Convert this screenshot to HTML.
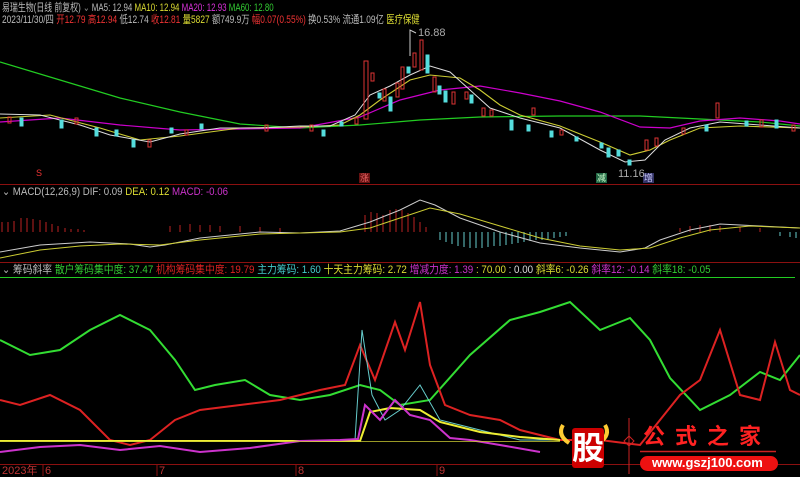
<!DOCTYPE html><html><head><meta charset="utf-8"><style>
body{margin:0;background:#000;width:800px;height:476px;overflow:hidden;font-family:"Liberation Sans","Noto Sans CJK SC",sans-serif;font-size:11px}
.t{position:absolute;white-space:nowrap;line-height:12px;transform-origin:0 0}
</style></head><body>
<div style="position:relative;width:800px;height:476px">
<svg width="800" height="476" style="position:absolute;left:0;top:0">
<line x1="0" y1="184.5" x2="800" y2="184.5" stroke="#8b1010"/>
<line x1="0" y1="262.5" x2="800" y2="262.5" stroke="#8b1010"/>
<line x1="0" y1="277.5" x2="795" y2="277.5" stroke="#2c2"/>
<line x1="0" y1="464.5" x2="800" y2="464.5" stroke="#8b1010"/>
<g stroke="#8b1010"><line x1="43" y1="465" x2="43" y2="476"/><line x1="157" y1="465" x2="157" y2="476"/><line x1="296" y1="465" x2="296" y2="476"/><line x1="437" y1="465" x2="437" y2="476"/></g>
<polyline fill="none" stroke="#2c2" stroke-width="1.2" points="0,62 60,80 120,98 180,112 240,124 300,128 360,125 420,120 480,117 560,116 640,116 700,119 760,122 800,126"/>
<polyline fill="none" stroke="#c0c" stroke-width="1.2" points="0,122 60,118 120,125 180,130 240,129 300,128 360,117 400,100 440,90 480,86 520,93 560,101 600,112 640,127 670,128 700,121 740,118 780,121 800,124"/>
<polyline fill="none" stroke="#cc3" stroke-width="1.1" points="0,118 50,115 100,128 140,140 180,136 240,128 300,127 340,125 360,115 380,100 410,80 430,75 460,78 480,90 500,105 520,115 560,126 600,142 630,155 650,150 670,140 700,128 740,126 800,128"/>
<polyline fill="none" stroke="#ddd" stroke-width="1" points="0,114 40,115 80,125 110,135 150,142 180,134 220,128 260,128 300,126 330,126 355,115 370,95 390,86 410,75 430,66 450,72 470,90 490,108 520,118 560,128 600,150 625,162 645,160 665,140 690,128 720,122 760,125 800,128"/>
<g fill="#5dd" stroke="#5dd">
<rect x="20" y="118" width="3" height="8"/><rect x="60" y="120" width="3" height="8"/><rect x="95" y="128" width="3" height="8"/><rect x="115" y="130" width="3" height="6"/><rect x="132" y="140" width="3" height="7"/><rect x="170" y="128" width="3" height="5"/><rect x="200" y="124" width="3" height="5"/><rect x="322" y="130" width="3" height="6"/><rect x="340" y="122" width="3" height="4"/><rect x="378" y="93" width="3" height="5"/><rect x="389" y="97" width="3" height="14"/><rect x="407" y="67" width="3" height="6"/><rect x="426" y="55" width="3" height="18"/><rect x="438" y="86" width="3" height="8"/><rect x="444" y="91" width="3" height="11"/><rect x="470" y="95" width="3" height="8"/><rect x="510" y="120" width="3" height="10"/><rect x="527" y="125" width="3" height="6"/><rect x="550" y="131" width="3" height="6"/><rect x="575" y="137" width="3" height="4"/><rect x="600" y="143" width="3" height="5"/><rect x="607" y="148" width="3" height="9"/><rect x="617" y="150" width="3" height="6"/><rect x="628" y="160" width="3" height="5"/><rect x="705" y="125" width="3" height="6"/><rect x="745" y="121" width="3" height="5"/><rect x="775" y="120" width="3" height="8"/>
</g>
<g fill="none" stroke="#d33">
<rect x="8" y="117" width="3" height="6"/><rect x="75" y="118" width="3" height="6"/><rect x="148" y="140" width="3" height="7"/><rect x="185" y="130" width="3" height="5"/><rect x="265" y="125" width="3" height="6"/><rect x="310" y="125" width="3" height="6"/><rect x="355" y="118" width="3" height="6"/><rect x="364" y="61" width="4" height="58"/><rect x="371" y="73" width="3" height="8"/><rect x="383" y="89" width="3" height="12"/><rect x="396" y="83" width="3" height="14"/><rect x="401" y="67" width="3" height="22"/><rect x="413" y="53" width="3" height="14"/><rect x="420" y="40" width="3" height="30"/><rect x="433" y="77" width="3" height="15"/><rect x="452" y="92" width="3" height="12"/><rect x="465" y="92" width="3" height="7"/><rect x="482" y="108" width="3" height="8"/><rect x="490" y="110" width="3" height="6"/><rect x="532" y="108" width="3" height="7"/><rect x="560" y="130" width="3" height="5"/><rect x="645" y="140" width="3" height="10"/><rect x="655" y="138" width="3" height="8"/><rect x="682" y="128" width="3" height="6"/><rect x="716" y="103" width="3" height="15"/><rect x="760" y="120" width="3" height="7"/><rect x="792" y="125" width="3" height="6"/>
</g>
<polyline fill="none" stroke="#ccc" points="410,56 410,30 416,33"/>
<rect x="359" y="173" width="11" height="10" fill="#611"/>
<rect x="596" y="173" width="11" height="10" fill="#264"/>
<rect x="643" y="173" width="11" height="10" fill="#336"/>
<g stroke="#b22">
<line x1="2" y1="222" x2="2" y2="232"/><line x1="8" y1="222" x2="8" y2="232"/><line x1="14" y1="221" x2="14" y2="232"/><line x1="21" y1="218" x2="21" y2="232"/><line x1="27" y1="218" x2="27" y2="232"/><line x1="33" y1="219" x2="33" y2="232"/><line x1="40" y1="220" x2="40" y2="232"/><line x1="46" y1="222" x2="46" y2="232"/><line x1="52" y1="224" x2="52" y2="232"/><line x1="58" y1="226" x2="58" y2="232"/><line x1="65" y1="228" x2="65" y2="232"/><line x1="71" y1="229" x2="71" y2="232"/><line x1="78" y1="229" x2="78" y2="232"/><line x1="84" y1="230" x2="84" y2="232"/>
<line x1="170" y1="226" x2="170" y2="232"/><line x1="180" y1="225" x2="180" y2="232"/><line x1="190" y1="224" x2="190" y2="232"/><line x1="200" y1="225" x2="200" y2="232"/><line x1="210" y1="225" x2="210" y2="232"/><line x1="220" y1="226" x2="220" y2="232"/><line x1="240" y1="226" x2="240" y2="232"/><line x1="260" y1="227" x2="260" y2="232"/><line x1="280" y1="228" x2="280" y2="232"/>
<line x1="365" y1="215" x2="365" y2="232"/><line x1="371" y1="212" x2="371" y2="232"/><line x1="377" y1="213" x2="377" y2="232"/><line x1="383" y1="215" x2="383" y2="232"/><line x1="390" y1="210" x2="390" y2="232"/><line x1="396" y1="209" x2="396" y2="232"/><line x1="402" y1="210" x2="402" y2="232"/><line x1="408" y1="213" x2="408" y2="232"/><line x1="414" y1="217" x2="414" y2="232"/><line x1="420" y1="222" x2="420" y2="232"/><line x1="426" y1="227" x2="426" y2="232"/>
<line x1="680" y1="228" x2="680" y2="232"/><line x1="690" y1="226" x2="690" y2="232"/><line x1="700" y1="225" x2="700" y2="232"/><line x1="710" y1="225" x2="710" y2="232"/><line x1="720" y1="226" x2="720" y2="232"/><line x1="740" y1="227" x2="740" y2="232"/><line x1="760" y1="228" x2="760" y2="232"/>
</g>
<g stroke="#6cc">
<line x1="440" y1="232" x2="440" y2="240"/><line x1="446" y1="232" x2="446" y2="242"/><line x1="452" y1="232" x2="452" y2="244"/><line x1="458" y1="232" x2="458" y2="246"/><line x1="464" y1="232" x2="464" y2="247"/><line x1="470" y1="232" x2="470" y2="248"/><line x1="476" y1="232" x2="476" y2="248"/><line x1="482" y1="232" x2="482" y2="248"/><line x1="488" y1="232" x2="488" y2="247"/><line x1="494" y1="232" x2="494" y2="246"/><line x1="500" y1="232" x2="500" y2="246"/><line x1="506" y1="232" x2="506" y2="245"/><line x1="512" y1="232" x2="512" y2="244"/><line x1="518" y1="232" x2="518" y2="243"/><line x1="524" y1="232" x2="524" y2="242"/><line x1="530" y1="232" x2="530" y2="241"/><line x1="536" y1="232" x2="536" y2="240"/><line x1="542" y1="232" x2="542" y2="240"/><line x1="548" y1="232" x2="548" y2="239"/><line x1="554" y1="232" x2="554" y2="238"/><line x1="560" y1="232" x2="560" y2="237"/><line x1="566" y1="232" x2="566" y2="236"/><line x1="780" y1="232" x2="780" y2="236"/><line x1="790" y1="232" x2="790" y2="237"/><line x1="796" y1="232" x2="796" y2="238"/>
</g>
<polyline fill="none" stroke="#ccc" points="0,252 40,245 90,242 130,244 150,247 165,245 200,238 260,232 300,233 340,231 370,222 400,210 420,200 435,205 460,218 500,232 540,243 580,248 620,252 645,248 660,240 690,230 720,224 760,226 800,228"/>
<polyline fill="none" stroke="#cc3" points="0,258 40,250 80,246 120,244 160,245 200,240 260,234 300,233 340,232 370,228 400,218 430,208 460,214 500,226 540,238 580,246 620,250 650,248 680,238 710,230 750,226 800,228"/>
<polyline fill="none" stroke="#3d3" stroke-width="2" points="0,340 30,355 60,350 90,330 120,315 150,330 175,360 195,390 215,385 245,380 270,395 300,400 330,395 360,385 380,390 400,405 430,400 470,355 510,320 540,312 570,302 600,330 630,318 650,340 670,378 700,410 730,395 760,372 780,380 800,355"/>
<polyline fill="none" stroke="#d22" stroke-width="2" points="0,400 20,405 50,395 80,410 110,440 130,445 150,440 175,420 200,410 240,405 280,400 320,390 345,385 360,345 375,380 395,322 405,350 420,302 430,365 445,405 470,415 500,420 520,430 560,440 600,440 640,445 680,395 700,380 720,330 740,395 760,400 775,342 790,390 800,395"/>
<polyline fill="none" stroke="#6cc" stroke-width="1" points="355,440 362,330 372,395 385,420 400,410 420,385 440,420 480,430 520,440 560,440"/>
<polyline fill="none" stroke="#ee3" stroke-width="2" points="0,441 360,441 370,412 390,408 420,410 440,422 480,432 520,437 560,440"/>
<polyline fill="none" stroke="#c3c" stroke-width="2" points="0,452 40,447 80,445 120,450 160,446 200,452 250,448 300,441 340,440 358,439 365,405 380,420 395,400 410,415 430,420 450,438 470,440 500,445 540,452"/>
<line x1="0" y1="441.5" x2="560" y2="441.5" stroke="#cc3" stroke-width="0.8"/>
<line x1="629" y1="418" x2="629" y2="474" stroke="#c22"/>
<path d="M629 436 l5 5 -5 5 -5 -5z" fill="none" stroke="#c22"/>
<line x1="640" y1="451.5" x2="776" y2="451.5" stroke="#c22" stroke-width="1.5"/>
<rect x="640" y="456" width="138" height="15" rx="7.5" fill="#e11"/>
<path d="M563 425 q-6 10 6 18 M605 425 q6 10 -6 18" fill="none" stroke="#fc3" stroke-width="4"/>
<rect x="572" y="428" width="32" height="40" fill="#c00" rx="3"/>
</svg>
<div class="t" style="left:2px;top:2px;color:#bbb;transform:scaleX(0.72)">易瑞生物(日线 前复权) <span style="color:#888">⌄</span> MA5: 12.94 <span style="color:#dd3">MA10: 12.94</span> <span style="color:#d3d">MA20: 12.93</span> <span style="color:#3c3">MA60: 12.80</span></div>
<div class="t" style="left:2px;top:14px;color:#bbb;transform:scaleX(0.76)">2023/11/30/四 <span style="color:#e33">开12.79 高12.94</span> 低12.74 <span style="color:#e33">收12.81</span> <span style="color:#dd3">量5827</span> 额749.9万 <span style="color:#e33">幅0.07(0.55%)</span> 换0.53% 流通1.09亿 <span style="color:#dd3">医疗保健</span></div>
<div class="t" style="left:418px;top:27px;color:#aaa">16.88</div>
<div class="t" style="left:618px;top:168px;color:#aaa">11.16</div>
<div class="t" style="left:36px;top:167px;color:#e33;font-size:9px">S</div>
<div class="t" style="left:360px;top:172px;color:#e66;font-size:9px">涨</div>
<div class="t" style="left:597px;top:172px;color:#cfc;font-size:9px">减</div>
<div class="t" style="left:644px;top:172px;color:#ccf;font-size:9px">增</div>
<div class="t" style="left:2px;top:186px;color:#bbb;transform:scaleX(0.88)">⌄ MACD(12,26,9) DIF: 0.09 <span style="color:#dd3">DEA: 0.12</span> <span style="color:#c3c">MACD: -0.06</span></div>
<div class="t" style="left:2px;top:264px;color:#bbb;transform:scaleX(0.89)">⌄ 筹码斜率 <span style="color:#3c3">散户筹码集中度: 37.47</span> <span style="color:#d22">机构筹码集中度: 19.79</span> <span style="color:#4cc">主力筹码: 1.60</span> <span style="color:#dd3">十天主力筹码: 2.72</span> <span style="color:#c3c">增减力度: 1.39</span> <span style="color:#dd3">: 70.00</span> <span style="color:#ddd">: 0.00</span> <span style="color:#dd3">斜率6: -0.26</span> <span style="color:#c3c">斜率12: -0.14</span> <span style="color:#3c3">斜率18: -0.05</span></div>
<div class="t" style="left:2px;top:465px;color:#b33">2023年</div>
<div class="t" style="left:45px;top:465px;color:#b33">6</div>
<div class="t" style="left:159px;top:465px;color:#b33">7</div>
<div class="t" style="left:298px;top:465px;color:#b33">8</div>
<div class="t" style="left:439px;top:465px;color:#b33">9</div>
<div class="t" style="left:572px;top:429px;color:#fff;font-size:32px;line-height:38px;font-weight:bold">股</div>
<div class="t" style="left:643px;top:424px;color:#f22;font-size:22px;line-height:26px;font-weight:bold;letter-spacing:10px">公式之家</div>
<div class="t" style="left:652px;top:457px;color:#fff;font-size:13px;font-weight:bold">www.gszj100.com</div>
</div>
</body></html>
